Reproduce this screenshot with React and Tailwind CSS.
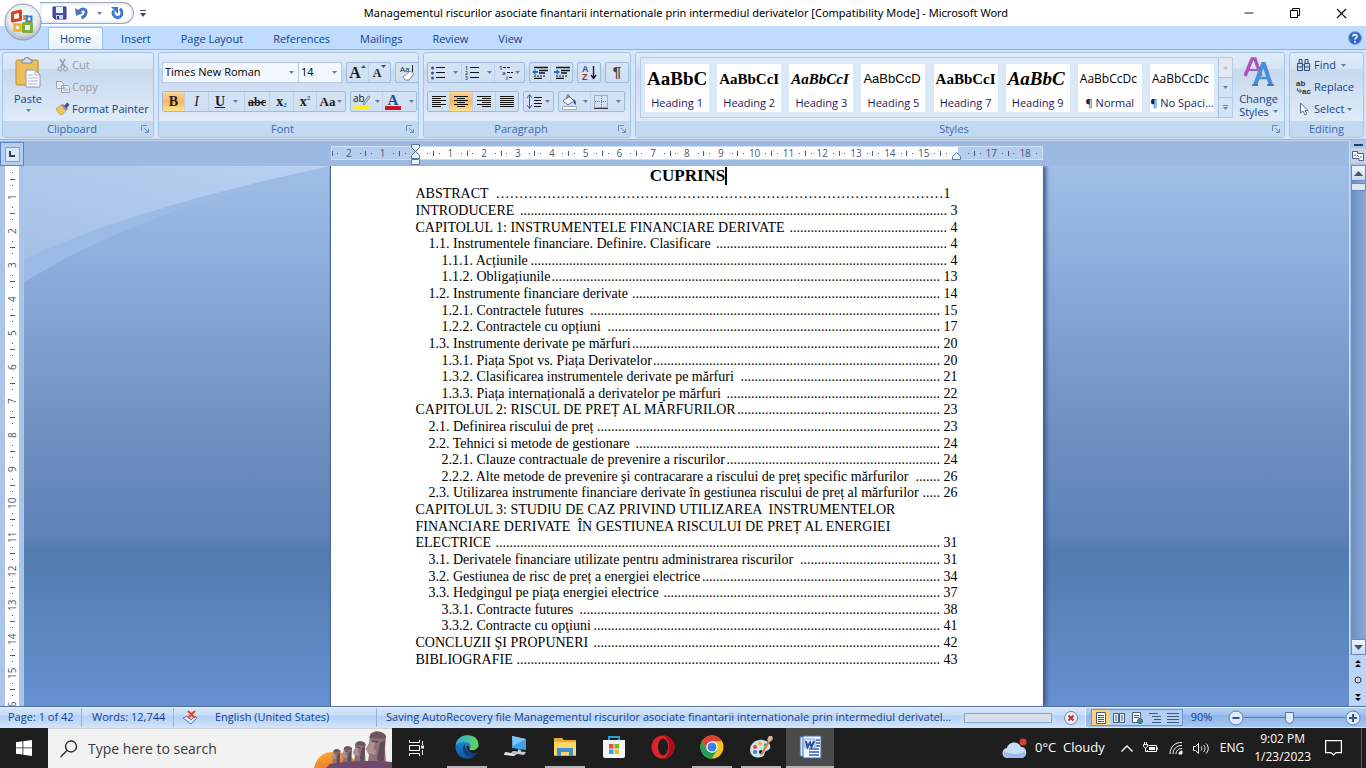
import { Minus, X } from "lucide-react";

const tabs = ["Home", "Insert", "Page Layout", "References", "Mailings", "Review", "View"];

const styleCards = [
  { name: "Heading 1", sample: "AaBbC", look: "font-['Liberation_Serif',serif] font-bold text-[19px]" },
  { name: "Heading 2", sample: "AaBbCcI", look: "font-['Liberation_Serif',serif] font-bold text-[15px]" },
  { name: "Heading 3", sample: "AaBbCcI", look: "font-['Liberation_Serif',serif] font-bold italic text-[15px]" },
  { name: "Heading 5", sample: "AaBbCcD", look: "font-['Liberation_Sans',sans-serif] text-[13px]" },
  { name: "Heading 7", sample: "AaBbCcI", look: "font-['Liberation_Serif',serif] font-bold text-[15px]" },
  { name: "Heading 9", sample: "AaBbC", look: "font-['Liberation_Serif',serif] font-bold italic text-[19px]" },
  { name: "¶ Normal", sample: "AaBbCcDc", look: "font-['Open_Sans',sans-serif] text-[12px]" },
  { name: "¶ No Spaci...", sample: "AaBbCcDc", look: "font-['Open_Sans',sans-serif] text-[12px]" },
];

// dots: length of the tab leader between the entry and its page number
const toc = [
  { level: 0, text: "INTRODUCERE ", dots: 122, page: 3 },
  { level: 0, text: "CAPITOLUL 1: INSTRUMENTELE FINANCIARE DERIVATE ", dots: 45, page: 4 },
  { level: 1, text: "1.1. Instrumentele financiare. Definire. Clasificare ", dots: 66, page: 4 },
  { level: 2, text: "1.1.1. Acțiunile", dots: 119, page: 4 },
  { level: 2, text: "1.1.2. Obligațiunile", dots: 111, page: 13 },
  { level: 1, text: "1.2. Instrumente financiare derivate ", dots: 88, page: 14 },
  { level: 2, text: "1.2.1. Contractele futures ", dots: 100, page: 15 },
  { level: 2, text: "1.2.2. Contractele cu opțiuni ", dots: 95, page: 17 },
  { level: 1, text: "1.3. Instrumente derivate pe mărfuri", dots: 88, page: 20 },
  { level: 2, text: "1.3.1. Piața Spot vs. Piața Derivatelor", dots: 82, page: 20 },
  { level: 2, text: "1.3.2. Clasificarea instrumentele derivate pe mărfuri ", dots: 57, page: 21 },
  { level: 2, text: "1.3.3. Piața internațională a derivatelor pe mărfuri ", dots: 61, page: 22 },
  { level: 0, text: "CAPITOLUL 2: RISCUL DE PREȚ AL MĂRFURILOR", dots: 58, page: 23 },
  { level: 1, text: "2.1. Definirea riscului de preț", dots: 98, page: 23 },
  { level: 1, text: "2.2. Tehnici si metode de gestionare ", dots: 87, page: 24 },
  { level: 2, text: "2.2.1. Clauze contractuale de prevenire a riscurilor", dots: 61, page: 24 },
  { level: 2, text: "2.2.2. Alte metode de prevenire şi contracarare a riscului de preț specific mărfurilor ", dots: 7, page: 26 },
  { level: 1, text: "2.3. Utilizarea instrumente financiare derivate în gestiunea riscului de preț al mărfurilor", dots: 5, page: 26 },
  { level: 0, text: "CAPITOLUL 3: STUDIU DE CAZ PRIVIND UTILIZAREA  INSTRUMENTELOR" },
  { level: 0, text: "FINANCIARE DERIVATE  ÎN GESTIUNEA RISCULUI DE PREȚ AL ENERGIEI" },
  { level: 0, text: "ELECTRICE ", dots: 127, page: 31 },
  { level: 1, text: "3.1. Derivatele financiare utilizate pentru administrarea riscurilor ", dots: 40, page: 31 },
  { level: 1, text: "3.2. Gestiunea de risc de preț a energiei electrice", dots: 68, page: 34 },
  { level: 1, text: "3.3. Hedgingul pe piaţa energiei electrice ", dots: 79, page: 37 },
  { level: 2, text: "3.3.1. Contracte futures ", dots: 103, page: 38 },
  { level: 2, text: "3.3.2. Contracte cu opţiuni", dots: 99, page: 41 },
  { level: 0, text: "CONCLUZII ŞI PROPUNERI ", dots: 99, page: 42 },
  { level: 0, text: "BIBLIOGRAFIE", dots: 121, page: 43 },
];

const indents = ["", "pl-[13px]", "pl-[26px]"];

const Caret = ({ className = "" }) => (
  <svg width="5" height="3" viewBox="0 0 5 3" className={`shrink-0 ${className}`}>
    <path d="M0 0h5L2.500 3z" fill="#5f80ad" />
  </svg>
);

/* ---------- Title bar ---------- */

const OfficeLogo = () => (
  <svg width="38" height="38" viewBox="0 0 38 38">
    <defs>
      <radialGradient id="orb" cx="50%" cy="35%" r="65%">
        <stop offset="0" stopColor="#ffffff" />
        <stop offset="0.65" stopColor="#e4e8ef" />
        <stop offset="1" stopColor="#a9b4c6" />
      </radialGradient>
    </defs>
    <circle cx="19" cy="19" r="18" fill="url(#orb)" stroke="#8d9bb3" />
    <path d="M8.500 10l8-2v8.500l-8 1.500z" fill="none" stroke="#d8431f" strokeWidth="3" strokeLinejoin="round" />
    <path d="M20 13h3v3h-3z" fill="none" stroke="#e88b2c" strokeWidth="2" />
    <path d="M22.500 13.500h5v5h-5z" fill="none" stroke="#3d7fd0" strokeWidth="2" />
    <path d="M10.500 21.500h6v6h-6z" fill="none" stroke="#f0b21c" strokeWidth="2.500" />
    <path d="M19.500 20.500h8v8h-8z" fill="none" stroke="#7daf3a" strokeWidth="3" strokeLinejoin="round" />
  </svg>
);

const TitleBar = () => (
  <header className="flex h-[26px] shrink-0 items-center bg-white">
    <div className="ml-10 flex h-[22px] w-[94px] items-center gap-2 rounded-r-full border border-l-0 border-[#9aa6bd] pl-3 shadow-[inset_0_0_4px_#c9d6ea]">
      <button aria-label="Save">
        <svg width="15" height="14" viewBox="0 0 15 14">
          <path d="M1 1h13v12H3l-2-2z" fill="#4a4fae" stroke="#30358a" />
          <path d="M4 1h7v6H4z" fill="#eef2fb" />
          <path d="M4 9h7v4H4z" fill="#cfd6ec" />
          <path d="M5 10h2v3H5z" fill="#30358a" />
        </svg>
      </button>
      <button aria-label="Undo" className="flex items-center gap-2">
        <svg width="14" height="14" viewBox="0 0 14 14">
          <path d="M4 6C6 2 12 2 11 7c-.5 2.500-2 4-4.500 5" fill="none" stroke="#4a74bd" strokeWidth="3" />
          <path d="M0 2l1 8 7-3z" fill="#4a74bd" />
        </svg>
        <Caret />
      </button>
      <button aria-label="Redo">
        <svg width="14" height="14" viewBox="0 0 14 14">
          <path d="M3.500 4.500c-3 7 8 10 8.500 2.500 0-2-.5-3-2-4.500" fill="none" stroke="#3b7bd0" strokeWidth="3" />
          <path d="M1 1h7v7z" fill="#3b7bd0" />
        </svg>
      </button>
    </div>
    <button aria-label="Customize Quick Access Toolbar" className="ml-[6px]">
      <svg width="6" height="7" viewBox="0 0 6 7">
        <path d="M0 0h6v1H0zM0 3h6L3 7z" fill="#3a4a66" />
      </svg>
    </button>
    <h1 className="flex-1 truncate pt-px text-center font-['Noto_Sans',sans-serif] text-[11px] text-black">
      Managementul riscurilor asociate finantarii internationale prin intermediul derivatelor [Compatibility Mode] - Microsoft Word
    </h1>
    <div className="flex pr-[2px] text-black">
      <button aria-label="Minimize" className="flex w-[46px] items-center justify-center">
        <Minus size={14} strokeWidth={1.500} />
      </button>
      <button aria-label="Restore" className="flex w-[46px] items-center justify-center">
        <svg width="10" height="10" viewBox="0 0 10 10" fill="none" stroke="currentColor">
          <path d="M.5 2.500h7v7h-7zM2.500 2.500v-2h7v7h-2" />
        </svg>
      </button>
      <button aria-label="Close" className="flex w-[46px] items-center justify-center">
        <X size={17} strokeWidth={1.500} />
      </button>
    </div>
  </header>
);

const TabBar = () => (
  <nav className="flex h-[23px] shrink-0 items-end bg-[#bfdbff] pl-[48px]">
    <div className="flex flex-1 gap-[6px]">
      {tabs.map((tab, i) => (
        <button
          key={tab}
          className={`h-[22px] border border-b-0 px-[11px] pt-px text-[11px] text-[#15428b] ${
            i === 0 ? "rounded-t-[3px] border-[#a0bde4] bg-linear-to-b from-white to-[#e6f0fb]" : "border-transparent"
          }`}
        >
          {tab}
        </button>
      ))}
    </div>
    <button aria-label="Help" className="mr-1 mb-1">
      <svg width="14" height="14" viewBox="0 0 14 14">
        <circle cx="7" cy="7" r="6.500" fill="#2f68c5" stroke="#7fa6de" />
        <path d="M4.800 5.500C5 3 9.200 3 9 5.500c0 1.500-2 1.500-2 3" fill="none" stroke="#fff" strokeWidth="1.600" />
        <circle cx="7" cy="10.700" r="1" fill="#fff" />
      </svg>
    </button>
  </nav>
);

/* ---------- Ribbon ---------- */

const Group = ({ title, launcher = true, className = "", children }) => (
  <section
    className={`flex flex-col overflow-hidden rounded-[3px] border border-[#a5c3e8] bg-[linear-gradient(#dfebf8_0,#d6e4f4_18%,#c8d9ee_20%,#dde9f7_75%,#e4effb_100%)] ${className}`}
  >
    <div className="flex flex-1">{children}</div>
    <div className="flex h-[16px] items-center bg-[#c1d9f1] text-[#3e6aaa]">
      <h2 className="flex-1 text-center text-[11px] leading-4">{title}</h2>
      {launcher && (
        <button aria-label={`${title} options`} className="mr-1">
          <svg width="8" height="8" viewBox="0 0 8 8" fill="none" stroke="#6a8fc0">
            <path d="M.5 6V.5H6M3 3l4 4M7.500 4v3.500H4" />
          </svg>
        </button>
      )}
    </div>
  </section>
);

const Cluster = ({ children }) => (
  <div className="flex h-[21px] items-stretch divide-x divide-[#bcd0ea] rounded-[2px] border border-[#9dbadf] bg-linear-to-b from-[#d5e3f4] to-[#cfdff2] text-[#1d1d1d]">
    {children}
  </div>
);

const Tool = ({ label, active, className = "w-[22px]", children }) => (
  <button
    aria-label={label}
    className={`flex items-center justify-center gap-1 ${className} ${
      active ? "bg-linear-to-b from-[#fdd49a] via-[#fbb55a] to-[#fee58c]" : ""
    }`}
  >
    {children}
  </button>
);

const Lines = ({ rows }) => (
  <svg width="14" height="13" viewBox="0 0 14 13" fill="#111">
    {rows.map(([x, w], i) => (
      <rect key={i} x={x} y={i * 2 + 1} width={w} height="1" />
    ))}
  </svg>
);

const ListIcon = ({ marks }) => (
  <svg width="14" height="14" viewBox="0 0 14 14">
    {marks.map((m, i) => (
      <g key={i}>
        {m ? (
          <text x="0" y={i * 5 + 4} fontSize="5" fontWeight="700" fill="#2f5597">{m}</text>
        ) : (
          <circle cx="1.500" cy={i * 5 + 2} r="1.500" fill="#2f5597" />
        )}
        <rect x="5" y={i * 5 + 1} width="9" height="1" fill="#111" />
      </g>
    ))}
  </svg>
);

const Clipboard = () => (
  <Group title="Clipboard" className="w-[152px]">
    <button className="flex w-[50px] flex-col items-center pt-1 text-[11px] leading-4 text-[#15428b]">
      <svg width="28" height="32" viewBox="0 0 28 32">
        <rect x="2" y="3" width="22" height="25" rx="1.500" fill="#efbd5a" stroke="#b98d3c" />
        <path d="M8 6V3h2a3 2.500 0 0 1 6 0h2v3z" fill="#d9dde4" stroke="#7c8799" />
        <path d="M12 13h9l5 5v12H12z" fill="#fff" stroke="#8796b4" />
        <path d="M21 13v5h5M14 18h5M14 21h10M14 24h10M14 27h10" fill="none" stroke="#a5b4d3" />
      </svg>
      <span className="mt-[2px]">Paste</span>
      <Caret className="mt-[2px]" />
    </button>
    <div className="flex flex-col pt-px text-[11px] text-[#15428b]">
      <button className="flex h-[22px] items-center gap-[2px] pl-[3px] text-[#9a9ea6]">
        <svg width="14" height="14" viewBox="0 0 14 14" fill="none" stroke="#8f98a8">
          <path d="M4 1l5 8M9 1L5 9" strokeWidth="1.500" />
          <circle cx="4" cy="11" r="2" />
          <circle cx="9.500" cy="11" r="2" />
        </svg>
        Cut
      </button>
      <button className="flex h-[22px] items-center gap-[2px] pl-[3px] text-[#9a9ea6]">
        <svg width="14" height="12" viewBox="0 0 14 12" fill="#e9eef6" stroke="#9aa5b8">
          <path d="M.5.5h5l2 2v5h-7zM5.500 4.500h6l2 2v5h-8z" />
          <path d="M7 7h3M7 9h5" />
        </svg>
        Copy
      </button>
      <button className="flex h-[22px] items-center gap-[2px] pl-[3px]">
        <svg width="14" height="14" viewBox="0 0 14 14">
          <path d="M0 7l5-4 5 5-4 5c-2 0-4-3-6-6z" fill="#f0c860" stroke="#b08a30" strokeWidth=".7" />
          <path d="M5 3l2-1 5 5-2 2z" fill="#8f8fb8" />
          <path d="M8 4l3-3.500 2.500 2-3 4z" fill="#4a4f86" />
        </svg>
        Format Painter
      </button>
    </div>
  </Group>
);

const FontGroup = () => (
  <Group title="Font" className="w-[261px]">
    <div className="flex flex-1 flex-col gap-2 px-[3px] pt-[9px]">
      <div className="flex gap-1">
        <div className="flex h-[21px] border border-[#b4cbe9] bg-[#f3f8fe] text-[11px] text-black">
          <label className="relative flex w-[136px] items-center border-r border-[#b4cbe9]">
            <select aria-label="Font" className="w-full appearance-none bg-transparent pl-[2px] outline-none">
              <option>Times New Roman</option>
            </select>
            <Caret className="absolute right-1" />
          </label>
          <label className="relative flex w-[42px] items-center">
            <select aria-label="Font size" className="w-full appearance-none bg-transparent pl-[2px] outline-none">
              <option>14</option>
            </select>
            <Caret className="absolute right-1" />
          </label>
        </div>
        <Cluster>
          <Tool label="Grow Font">
            <span className="font-['Liberation_Serif',serif] text-[16px] font-bold">A</span>
            <svg width="5" height="3" viewBox="0 0 5 3" className="-ml-1 mb-3"><path d="M0 3h5L2.500 0z" fill="#2f5597" /></svg>
          </Tool>
          <Tool label="Shrink Font" className="w-[21px]">
            <span className="font-['Liberation_Serif',serif] text-[12px] font-bold">A</span>
            <svg width="5" height="3" viewBox="0 0 5 3" className="-ml-1 mb-3"><path d="M0 0h5L2.500 3z" fill="#2f5597" /></svg>
          </Tool>
        </Cluster>
        <Cluster>
          <Tool label="Clear Formatting">
            <svg width="17" height="17" viewBox="0 0 17 17">
              <text x="1" y="8" fontSize="8" fontFamily="Open Sans" fill="#222">Aa</text>
              <path d="M13.500 1v7" stroke="#222" />
              <path d="M4 13l7-6 4 3-5 6H6z" fill="#fff" stroke="#7c88a0" />
            </svg>
          </Tool>
        </Cluster>
      </div>
      <div className="flex gap-1 font-['Liberation_Serif',serif] text-[14px]">
        <Cluster>
          <Tool label="Bold" active><b>B</b></Tool>
          <Tool label="Italic" className="w-[24px]"><i>I</i></Tool>
          <Tool label="Underline" className="w-[36px]"><b className="underline">U</b><Caret className="ml-1" /></Tool>
          <Tool label="Strikethrough" className="w-[25px]"><b className="text-[12px] line-through">abc</b></Tool>
          <Tool label="Subscript" className="w-[24px]">
            <b className="flex items-end leading-4">x<small className="text-[7px] leading-[9px] text-[#2f5597]">2</small></b>
          </Tool>
          <Tool label="Superscript" className="w-[23px]">
            <b className="flex items-start leading-4">x<small className="text-[7px] leading-[9px] text-[#2f5597]">2</small></b>
          </Tool>
          <Tool label="Change Case" className="w-[28px]"><b className="text-[13px]">Aa</b><Caret className="-ml-[2px]" /></Tool>
        </Cluster>
        <Cluster>
          <Tool label="Highlight" className="w-[32px]">
            <svg width="18" height="17" viewBox="0 0 18 17" overflow="visible">
              <text x="0" y="9" fontSize="10" fontFamily="Open Sans" fill="#111">ab</text>
              <path d="M10 11l5-8 2 1-5 7-2 2z" fill="#cfd8ea" stroke="#555f7a" strokeWidth=".7" />
              <path d="M0 12h16v4H0z" fill="#f7ec2b" />
            </svg>
            <Caret />
          </Tool>
          <Tool label="Font Color" className="w-[33px]">
            <span className="flex h-[17px] w-4 flex-col items-center border-b-4 border-[#cf1420] text-[15px] leading-[14px] text-[#264a8c]"><b>A</b></span>
            <Caret className="ml-1" />
          </Tool>
        </Cluster>
      </div>
    </div>
  </Group>
);

const Paragraph = () => (
  <Group title="Paragraph" className="w-[208px]">
    <div className="flex flex-1 flex-col gap-2 px-[3px] pt-[9px]">
      <div className="flex gap-1">
        <Cluster>
          <Tool label="Bullets" className="w-[34px]"><ListIcon marks={["", "", ""]} /><Caret className="ml-1" /></Tool>
          <Tool label="Numbering" className="w-[33px]"><ListIcon marks={["1", "2", "3"]} /><Caret className="ml-1" /></Tool>
          <Tool label="Multilevel List" className="w-[29px]">
            <svg width="16" height="15" viewBox="0 0 16 15" overflow="visible">
              <g fontSize="6" fontWeight="700" fill="#2f5597">
                <text x="0" y="5">1</text>
                <text x="3" y="10">a</text>
                <text x="7" y="15">i</text>
              </g>
              <path d="M4 2.500h8M8 7.500h6M10 12.500h4" stroke="#111" strokeDasharray="3 1" />
            </svg>
            <Caret className="-ml-1" />
          </Tool>
        </Cluster>
        <Cluster>
          {["Decrease Indent", "Increase Indent"].map((label, i) => (
            <Tool key={label} label={label} className="w-[21px]">
              <svg width="16" height="13" viewBox="0 0 16 13">
                <path d="M2 1.500h14M7 4.500h9M7 7h6M2 12.500h8" stroke="#111" strokeWidth="1.500" />
                <path d="M2 10h11" stroke="#111" strokeDasharray="2 1" />
                <path d={i === 0 ? "M0 6l3.500-3v2H6v2H3.500v2z" : "M6 6L2.500 3v2H0v2h2.500v2z"} fill="#2f67c5" />
              </svg>
            </Tool>
          ))}
        </Cluster>
        <Cluster>
          <Tool label="Sort">
            <svg width="15" height="17" viewBox="0 0 15 17">
              <g fontFamily="Liberation Sans" fontSize="9" fontWeight="700">
                <text x="0" y="8" fill="#2f5597">A</text>
                <text x="0" y="16" fill="#b5242c">Z</text>
              </g>
              <path d="M11.500 2v12M9 11l2.500 3.500L14 11" fill="none" stroke="#111" strokeWidth="1.300" />
            </svg>
          </Tool>
        </Cluster>
        <Cluster>
          <Tool label="Show paragraph marks"><span className="font-['Liberation_Sans',sans-serif] text-[15px] font-bold text-[#444]">¶</span></Tool>
        </Cluster>
      </div>
      <div className="flex gap-1">
        <Cluster>
          <Tool label="Align Left"><Lines rows={[[0, 14], [0, 9], [0, 14], [0, 9], [0, 14], [0, 9]]} /></Tool>
          <Tool label="Center" active className="w-[23px]"><Lines rows={[[0, 14], [3, 8], [0, 14], [3, 8], [0, 14], [3, 8]]} /></Tool>
          <Tool label="Align Right" className="w-[23px]"><Lines rows={[[0, 14], [5, 9], [0, 14], [5, 9], [0, 14], [5, 9]]} /></Tool>
          <Tool label="Justify"><Lines rows={[[0, 14], [0, 14], [0, 14], [0, 14], [0, 14], [0, 14]]} /></Tool>
        </Cluster>
        <Cluster>
          <Tool label="Line spacing" className="w-[29px]">
            <svg width="15" height="15" viewBox="0 0 15 15">
              <path d="M2.500 1v13M0 4l2.500-3.500L5 4M0 11l2.500 3.500L5 11" fill="none" stroke="#2f67a5" />
              <path d="M7 3.500h8M7 6.500h7M7 9.500h8M7 12.500h7" stroke="#111" />
            </svg>
            <Caret className="-ml-px" />
          </Tool>
        </Cluster>
        <Cluster>
          <Tool label="Shading" className="w-[32px]">
            <svg width="17" height="16" viewBox="0 0 17 16">
              <path d="M2 7l6-5 5 5-6 4z" fill="#f2f6fc" stroke="#5b7195" />
              <path d="M6 5V1h2v3" fill="none" stroke="#5b7195" />
              <path d="M12 5c3 1 3 3 3 6-2-1-3-2-2-4z" fill="#3a5d98" />
              <path d="M1.500 12.500h14v3h-14z" fill="#fff" stroke="#9aabc6" />
            </svg>
            <Caret className="ml-px" />
          </Tool>
          <Tool label="Borders" className="w-[33px]">
            <svg width="14" height="14" viewBox="0 0 14 14" stroke="#6b7c98" fill="none">
              <path d="M.5.5h13v12H.5zM7.500 1v12M1 6.500h12" strokeDasharray="1 1" />
              <path d="M0 13.500h14" stroke="#333" />
            </svg>
            <Caret className="ml-1" />
          </Tool>
        </Cluster>
      </div>
    </div>
  </Group>
);

const Styles = () => (
  <Group title="Styles" className="min-w-0 flex-1">
    <div className="mt-[4px] mb-[3px] ml-[4px] flex min-w-0 flex-1 border border-[#b4cbe9] bg-[#dbe8f8]">
      <div className="flex flex-1 items-center justify-around overflow-hidden">
        {styleCards.map(({ name, sample, look }) => (
          <button key={name} className="flex h-[48px] w-[64px] flex-col bg-white">
            <span className="flex h-[31px] w-full items-center pl-[2px] text-black">
              <span className={`leading-[30px] ${look}`}>{sample}</span>
            </span>
            <span className="w-full text-center text-[11px] leading-4 whitespace-nowrap text-[#1b1b5e]">{name}</span>
          </button>
        ))}
      </div>
      <div className="flex w-[14px] flex-col divide-y divide-[#a8c4e8] border-l border-[#a8c4e8]">
        <button aria-label="Previous styles" className="flex flex-1 items-center justify-center bg-[#e6eaf0]">
          <svg width="5" height="3" viewBox="0 0 5 3"><path d="M0 3h5L2.500 0z" fill="#b5bccb" /></svg>
        </button>
        <button aria-label="Next styles" className="flex flex-1 items-center justify-center bg-[#d3e3f6]"><Caret /></button>
        <button aria-label="More styles" className="flex flex-1 flex-col items-center justify-center gap-px bg-[#d3e3f6]">
          <span className="h-px w-[5px] bg-[#5f80ad]" />
          <Caret />
        </button>
      </div>
    </div>
    <button className="flex w-[51px] flex-col items-center pt-[3px] text-[11px] leading-[13px] text-[#15428b]">
      <svg width="30" height="32" viewBox="0 0 30 32" fill="none">
        <path d="M1 20L8 3h3l6 17" stroke="#b052b8" strokeWidth="3.500" />
        <path d="M4 14h10" stroke="#b052b8" strokeWidth="2" />
        <path d="M11 29l8-21h1l7 21" stroke="#4a8fd6" strokeWidth="4" />
        <path d="M13 22h12" stroke="#4a8fd6" strokeWidth="2.500" />
        <path d="M8 29h6M23 29h7" stroke="#2f68ab" strokeWidth="1.500" />
      </svg>
      <span className="mt-[4px]">Change</span>
      <span className="flex items-center gap-1">Styles <Caret /></span>
    </button>
  </Group>
);

const Editing = () => (
  <Group title="Editing" launcher={false} className="w-[75px]">
    <div className="flex flex-col pt-px pl-[6px] text-[11px] text-[#15428b]">
      <button className="flex h-[22px] items-center gap-[3px]">
        <svg width="15" height="14" viewBox="0 0 15 14" fill="#c9d9f0" stroke="#2c4a80">
          <path d="M3 1.500h3v4H3zM9 1.500h3v4H9zM1.500 5.500h5v7h-5zM8.500 5.500h5v7h-5zM6.500 7h2" />
          <path d="M1.500 9h5M8.500 9h5" />
        </svg>
        Find <Caret className="ml-[2px]" />
      </button>
      <button className="flex h-[22px] items-center gap-[3px]">
        <svg width="15" height="15" viewBox="0 0 15 15" fontFamily="Liberation Sans" fontSize="8" fontWeight="700" fill="#333">
          <text x="0" y="6">ab</text>
          <text x="6" y="14">ac</text>
          <path d="M1.500 8v3H5M3.500 9L5.500 11l-2 2" fill="none" stroke="#2f5597" />
        </svg>
        Replace
      </button>
      <button className="flex h-[22px] items-center gap-[3px]">
        <svg width="15" height="14" viewBox="0 0 15 14">
          <path d="M4.500 1v10l2.500-2 2 4 2-1-2-3.500h3z" fill="#fff" stroke="#5a6b8a" />
        </svg>
        Select <Caret />
      </button>
    </div>
  </Group>
);

const Ribbon = () => (
  <div className="flex h-[91px] shrink-0 gap-1 border-t border-b border-t-[#8db2e3] border-b-[#8db2e3] bg-[#d5e6fb] px-[2px] pt-[2px] pb-px">
    <Clipboard />
    <FontGroup />
    <Paragraph />
    <Styles />
    <Editing />
  </div>
);

/* ---------- Workspace ---------- */

const HorizontalRuler = () => (
  <div className="relative mx-auto h-[14px] w-[712px] border border-[#cfe0f5] bg-[linear-gradient(90deg,#b5cdee_85px,#fff_85px,#fff_626px,#b5cdee_626px)] font-['Open_Sans',sans-serif] text-[10px] text-[#4a5a75]">
    <div className="grid h-full grid-cols-[repeat(21,minmax(0,1fr))]">
      {Array.from({ length: 21 }, (_, i) => i - 2).map((n) => (
        <div key={n} className="flex items-center justify-between">
          <span className="h-[5px] w-px bg-[#4a5a75]" />
          <span className="size-px bg-[#4a5a75]" />
          <span className="w-3 text-center leading-3">{n === 0 || n === 16 ? "" : Math.abs(n)}</span>
          <span className="size-px bg-[#4a5a75]" />
          <span />
        </div>
      ))}
    </div>
    <svg width="11" height="21" viewBox="0 0 11 21" className="absolute -top-[3px] left-[78px]" fill="#eef4fc" stroke="#5c78a5">
      <path d="M1.500.5h8v3l-4 4-4-4zM1.500 14.500v-3l4-4 4 4v3zM1.500 15.500h8v5h-8z" />
    </svg>
    <svg width="11" height="8" viewBox="0 0 11 8" className="absolute top-[5px] left-[619px]" fill="#eef4fc" stroke="#5c78a5">
      <path d="M1.500 7.500v-3l4-4 4 4v3z" />
    </svg>
  </div>
);

const VerticalRuler = () => (
  <div className="flex w-6 shrink-0 justify-center overflow-hidden bg-[#a9c6ea]">
    <div className="w-[14px] bg-white font-['Open_Sans',sans-serif] text-[10px] text-[#4a5a75]">
      <div className="flex h-[13px] items-center justify-center"><span className="size-px bg-[#4a5a75]" /></div>
      {Array.from({ length: 16 }, (_, i) => i + 1).map((n) => (
        <div key={n} className="flex h-[34px] flex-col items-center justify-between">
          <span className="h-px w-[5px] bg-[#4a5a75]" />
          <span className="size-px bg-[#4a5a75]" />
          <span className="h-3 rotate-180 text-center leading-[14px] [writing-mode:vertical-rl]">{n}</span>
          <span className="size-px bg-[#4a5a75]" />
          <span />
        </div>
      ))}
    </div>
  </div>
);

const Page = () => (
  <main className="relative mx-auto w-[712px] bg-white px-[85px] font-['Liberation_Serif',serif] text-black shadow-[3px_0_4px_#3c5a88,-1px_0_1px_#4c6a98]">
    <h2 className="flex h-5 items-center justify-center pl-1 text-[17px] font-bold">
      CUPRINS
      <span className="h-[18px] w-[2px] bg-black" />
    </h2>
    <div className="grid h-[482px] auto-rows-fr grid-cols-1 text-[14px] leading-4">
      <p className="flex items-center justify-between pr-[7px] whitespace-pre">
        <span>ABSTRACT</span>
        <span>{"…".repeat(32)}1</span>
      </p>
      {toc.map(({ level, text, dots, page }) => (
        <p key={text} className={`flex items-center justify-between whitespace-pre ${indents[level]}`}>
          <span>{text}</span>
          {page && (
            <span>
              {".".repeat(dots)} {page}
            </span>
          )}
        </p>
      ))}
    </div>
  </main>
);

const ScrollBar = () => (
  <div className="flex w-[17px] shrink-0 flex-col items-center border-l border-[#c5dbf5] bg-[#a9c6ea] pt-1">
    <span className="h-[2px] w-[9px] bg-[#24406f]" />
    <button aria-label="View Ruler" className="mt-[2px] flex size-[15px] items-center justify-center bg-[#c9d3e2]">
      <svg width="13" height="12" viewBox="0 0 13 12" fill="#fff" stroke="#4d5f80">
        <path d="M.5 1.500h5v2h6v7H7v-2H.5zM3 4v2M5 5l2 2M9 6v2" />
      </svg>
    </button>
    <button aria-label="Scroll up" className="mt-[2px] flex h-4 w-[15px] items-center justify-center border border-[#6c8ab8] bg-linear-to-b from-[#f1f5fb] to-[#c7d9f0]">
      <svg width="9" height="5" viewBox="0 0 9 5"><path d="M0 5h9L4.500 0z" fill="#3f5477" /></svg>
    </button>
    <div className="w-[15px] flex-1 bg-linear-to-r from-[#6c8ebd] to-[#86a8d4] pt-[2px]">
      <div className="h-2 border border-[#6c8ab8] bg-[#d9e6f6]" />
    </div>
    <button aria-label="Scroll down" className="flex h-4 w-[15px] items-center justify-center border border-[#6c8ab8] bg-linear-to-b from-[#f1f5fb] to-[#c7d9f0]">
      <svg width="9" height="5" viewBox="0 0 9 5"><path d="M0 0h9L4.500 5z" fill="#3f5477" /></svg>
    </button>
    <div className="flex h-[51px] w-full flex-col items-center justify-around bg-[#bcd5f5]">
      <button aria-label="Previous Page">
        <svg width="6" height="7" viewBox="0 0 6 7"><path d="M0 3l3-3 3 3zM0 7l3-3 3 3z" fill="#111" /></svg>
      </button>
      <button aria-label="Select Browse Object">
        <svg width="8" height="8" viewBox="0 0 8 8"><circle cx="4" cy="4" r="3" fill="#c9d3df" stroke="#333" /></svg>
      </button>
      <button aria-label="Next Page">
        <svg width="6" height="7" viewBox="0 0 6 7"><path d="M0 0l3 3 3-3zM0 4l3 3 3-3z" fill="#111" /></svg>
      </button>
    </div>
  </div>
);

const Workspace = () => (
  <div className="flex min-h-0 flex-1 border-b border-[#4f6f9f] bg-[#9cbae1]">
    <div className="flex min-w-0 flex-1 flex-col">
      <div className="flex h-[26px] shrink-0 items-start border-t border-[#c3d8ee]">
        <button aria-label="Tab stop" className="mt-px flex size-[24px] shrink-0 items-center justify-center border border-[#5b83c4] bg-[#b5cdee]">
          <span className="flex size-[15px] items-center justify-center border border-[#7ea0d3] bg-[#dbe8f8]">
            <span className="size-[6px] border-b-2 border-l-2 border-[#333f55]" />
          </span>
        </button>
        <div className="flex-1 pt-[5px]">
          <HorizontalRuler />
        </div>
      </div>
      <div className="flex min-h-0 flex-1">
        <VerticalRuler />
        <div className="relative flex min-w-0 flex-1 overflow-hidden bg-[linear-gradient(#9fbfe8_0%,#86a6d5_25%,#6d8fc0_50%,#5f83b8_68%,#537bb0_72%,#5a84bb_83%,#6690d0_100%)]">
          <svg width="307" height="120" viewBox="0 0 307 120" className="absolute top-0 left-0">
            <defs>
              <linearGradient id="swoosh" x1="0" y1="1" x2="1" y2="0">
                <stop offset="0" stopColor="#a3c0e4" />
                <stop offset="1" stopColor="#b9d2f3" />
              </linearGradient>
            </defs>
            <path d="M0 0h307C190 28 85 62 0 117z" fill="#9bbbe6" />
            <path d="M0 0h307C190 25 90 52 0 93z" fill="url(#swoosh)" />
          </svg>
          <Page />
        </div>
      </div>
    </div>
    <ScrollBar />
  </div>
);

/* ---------- Status bar ---------- */

const StatusBar = () => (
  <footer className="flex h-[21px] shrink-0 items-stretch border-t border-[#e8f2fe] bg-[linear-gradient(#d7e6f9_0,#c7dcf8_35%,#b3d0f5_40%,#d3e5fb_100%)] pb-px text-[11px] whitespace-nowrap text-[#15428b]">
    <button className="w-[82px] border-r border-[#94b3dc] pl-2 text-left">Page: 1 of 42</button>
    <button className="w-[92px] border-r border-[#94b3dc] pl-[10px] text-left">Words: 12,744</button>
    <button aria-label="Proofing errors" className="w-[34px] pl-[8px]">
      <svg width="17" height="15" viewBox="0 0 17 15">
        <path d="M1 8l4-2 4 4 4-4 2 2-6 6z" fill="#dce6f5" stroke="#5f7cad" />
        <path d="M6 1l7 7M13 1L6 8" stroke="#df4a2a" strokeWidth="2" />
      </svg>
    </button>
    <button className="w-[169px] border-r border-[#94b3dc] pl-[7px] text-left">English (United States)</button>
    <div className="flex min-w-0 flex-1 items-center pl-[9px]">
      <span className="min-w-0 flex-1">
        Saving AutoRecovery file Managementul riscurilor asociate finantarii internationale prin intermediul derivatel...
      </span>
      <span className="ml-2 h-[10px] w-[88px] shrink-0 border border-[#8ba3c7] bg-[#d9dfea]" />
      <button aria-label="Cancel" className="mr-[7px] ml-3 shrink-0">
        <svg width="14" height="14" viewBox="0 0 14 14">
          <circle cx="7" cy="7" r="6.500" fill="#e8eef7" stroke="#6e83a8" />
          <path d="M4.500 4.500l5 5M9.500 4.500l-5 5" stroke="#cc2d1e" strokeWidth="2" />
        </svg>
      </button>
    </div>
    <div className="flex w-[281px] shrink-0 items-center border-l border-[#eaf3ff] bg-[linear-gradient(#b5cff2_0,#a0c1ee_35%,#8eb4e8_40%,#a5c6f1_100%)] pl-[5px]">
      <div className="flex h-[17px] items-center border border-[#6d94cf] bg-[#b3cff3]">
        {[0, 1, 2, 3, 4].map((i) => (
          <button
            key={i}
            aria-label={["Print Layout", "Full Screen Reading", "Web Layout", "Outline", "Draft"][i]}
            className={`flex h-full w-[18px] items-center justify-center ${i === 0 ? "bg-[#fdcf7e]" : ""}`}
          >
            <svg width="12" height="12" viewBox="0 0 12 12" fill="none" stroke="#44597f">
              {i === 0 && <path d="M1.500.5h9v11h-9zM3 3.500h6M3 5.500h6M3 7.500h6M3 9.500h6" fill="#fff" />}
              {i === 1 && <path d="M.5 1.500h5v9h-5zM6.500 1.500h5v9h-5zM2 4h2M2 6h2M2 8h2M8 4h2M8 6h2M8 8h2" fill="#e8f0fb" />}
              {i === 2 && (
                <>
                  <path d="M1.500.5h8v10h-8zM3 3.500h5M3 5.500h5" fill="#fff" />
                  <circle cx="9" cy="9" r="2.500" fill="#3f9a78" stroke="#2a6d8f" />
                </>
              )}
              {i === 3 && <path d="M0 1.500h9M3 4.500h9M5 7.500h7M3 10.500h9" />}
              {i === 4 && <path d="M0 1.500h12M0 4.500h12M0 7.500h12M0 10.500h12" />}
            </svg>
          </button>
        ))}
      </div>
      <button className="w-[37px] text-center">90%</button>
      <button aria-label="Zoom out" className="ml-2">
        <svg width="16" height="16" viewBox="0 0 16 16">
          <circle cx="8" cy="8" r="7" fill="#dfeafa" stroke="#5d7fb8" />
          <path d="M4.500 8h7" stroke="#38557f" strokeWidth="2" />
        </svg>
      </button>
      <input
        type="range"
        aria-label="Zoom"
        min="10"
        max="190"
        defaultValue="90"
        className="h-4 min-w-0 flex-1 appearance-none bg-[linear-gradient(#5d7fb8,#5d7fb8)] bg-[length:100%_1px] bg-center bg-no-repeat [&::-webkit-slider-thumb]:h-[12px] [&::-webkit-slider-thumb]:w-[9px] [&::-webkit-slider-thumb]:appearance-none [&::-webkit-slider-thumb]:rounded-b-full [&::-webkit-slider-thumb]:border [&::-webkit-slider-thumb]:border-[#5573a5] [&::-webkit-slider-thumb]:bg-[#dfeafa]"
      />
      <button aria-label="Zoom in" className="mr-[5px]">
        <svg width="16" height="16" viewBox="0 0 16 16">
          <circle cx="8" cy="8" r="7" fill="#dfeafa" stroke="#5d7fb8" />
          <path d="M4 8h8M8 4v8" stroke="#38557f" strokeWidth="2" />
        </svg>
      </button>
    </div>
  </footer>
);

/* ---------- Taskbar ---------- */

const EdgeIcon = () => (
  <svg width="24" height="24" viewBox="0 0 24 24">
    <defs>
      <linearGradient id="edgeTop" x1="0" y1="0" x2="1" y2="0.300">
        <stop offset="0" stopColor="#2aa9e0" />
        <stop offset="1" stopColor="#5fd35a" />
      </linearGradient>
      <linearGradient id="edgeBody" x1="0" y1="0" x2="0" y2="1">
        <stop offset="0" stopColor="#1f94dc" />
        <stop offset="1" stopColor="#0c59a4" />
      </linearGradient>
    </defs>
    <circle cx="12" cy="12" r="11.500" fill="url(#edgeBody)" />
    <path d="M.8 10C2-3 24-3 23.500 10c0 4-4 6-8 5-1.500-.5-1.500-1-.5-2 1.500-2 0-6-5-6-4 0-7.500 1-9.200 3z" fill="url(#edgeTop)" />
    <path d="M10 9c-4 4-2 12 5 13 3 0 6-2 7.500-5-5 3-13 1-12.500-8z" fill="#0a3f86" />
    <path d="M14.500 13c-1 1-1 1.500.5 2 3 1 6 0 8.500-3.500L24 14l-1.500 3.500C18 20 11 17 11.500 11c1 0 3 0 3 2z" fill="#1e1e1e" />
  </svg>
);

const RemoteIcon = () => (
  <svg width="24" height="24" viewBox="0 0 24 24">
    <path d="M8 1l14 3v11L8 13z" fill="#3f9fe8" />
    <path d="M8 1l14 3-13 7z" fill="#7cc6f8" />
    <path d="M14 14l3 1v3h-3z" fill="#b9c4cf" />
    <path d="M9 16l13 1-2 3-13-2z" fill="#c5ccd3" />
    <path d="M1 17l12 2-3 2-10-1z" fill="#e3e7eb" />
  </svg>
);

const FolderIcon = () => (
  <svg width="24" height="24" viewBox="0 0 24 24">
    <path d="M1 3h8l2 2h12v16H1z" fill="#e8a92e" />
    <path d="M1 7h22v13H1z" fill="#fcd667" />
    <path d="M4 21v-8h16v8h-4v-4H8v4z" fill="#3f8fd0" />
  </svg>
);

const StoreIcon = () => (
  <svg width="24" height="24" viewBox="0 0 24 24">
    <path d="M7 6V2h10v4" fill="none" stroke="#2f9ad8" strokeWidth="2" />
    <path d="M1 5h22v16a2 2 0 0 1-2 2H3a2 2 0 0 1-2-2z" fill="#f3f6f9" />
    <path d="M7 9h4.500v4.500H7z" fill="#e8502a" />
    <path d="M12.500 9H17v4.500h-4.500z" fill="#7bb51f" />
    <path d="M7 14.500h4.500V19H7z" fill="#2ba0e0" />
    <path d="M12.500 14.500H17V19h-4.500z" fill="#f5b618" />
  </svg>
);

const OperaIcon = () => (
  <svg width="24" height="24" viewBox="0 0 24 24">
    <circle cx="12" cy="12" r="11.500" fill="#e3202f" />
    <path d="M12 .5a11.500 11.500 0 0 1 0 23c8-2 8-21 0-23z" fill="#a70f1c" />
    <ellipse cx="12" cy="12" rx="5" ry="8.500" fill="#1e1e1e" />
  </svg>
);

const ChromeIcon = () => (
  <svg width="24" height="24" viewBox="0 0 24 24">
    <circle cx="12" cy="12" r="11.500" fill="#f9c31f" />
    <path d="M2 6.250A11.500 11.500 0 0 1 22 6.250H12L7 15z" fill="#dd4335" />
    <path d="M2 6.250A11.500 11.500 0 0 0 12 23.500l5-8.600-10 0z" fill="#22a056" />
    <circle cx="12" cy="12" r="5.800" fill="#fff" />
    <circle cx="12" cy="12" r="4.500" fill="#3b7fe8" />
  </svg>
);

const PaintIcon = () => (
  <svg width="24" height="24" viewBox="0 0 24 24">
    <path d="M1 15C1 8 8 4 14 5c5 1 8 4 7 8-1 3-4 2-5 4s0 4-4 5C6 24 1 20 1 15z" fill="#cfe3f3" />
    <circle cx="6" cy="12" r="2" fill="#e2453b" />
    <circle cx="11" cy="8.500" r="2" fill="#f2b732" />
    <circle cx="16.500" cy="10" r="1.800" fill="#56a940" />
    <circle cx="6" cy="17" r="2" fill="#3a7ed0" />
    <circle cx="12" cy="17" r="2" fill="#1e1e1e" />
    <path d="M12 18l8-14 2 1-8 14-3 2z" fill="#c98a3f" />
    <path d="M18 5l2-4h3l1 3-3 3z" fill="#dcb88f" />
  </svg>
);

const WordIcon = () => (
  <svg width="24" height="24" viewBox="0 0 24 24">
    <path d="M2 2l5-1v21l-5-1z" fill="#dbe6f6" stroke="#3d69b0" />
    <path d="M5 1h18v22H5z" fill="#f4f8fd" stroke="#3d69b0" />
    <path d="M18 5h4M18 8h4M18 11h4M11 14h10M11 17h10M11 20h10" stroke="#2f5ea8" strokeWidth="1.500" />
    <path d="M7 4h10v9H7z" fill="#e9f0fa" stroke="#7f9fd3" />
    <path d="M8 6l1.500 6L12 7.500l1.500 4.500L16 6" fill="none" stroke="#2850a0" strokeWidth="2" />
  </svg>
);

const apps = [
  { name: "Microsoft Edge", icon: EdgeIcon, open: true },
  { name: "Remote Desktop", icon: RemoteIcon },
  { name: "File Explorer", icon: FolderIcon, open: true },
  { name: "Microsoft Store", icon: StoreIcon },
  { name: "Opera", icon: OperaIcon },
  { name: "Google Chrome", icon: ChromeIcon, open: true },
  { name: "Paint", icon: PaintIcon, open: true },
  { name: "Microsoft Word", icon: WordIcon, open: true, active: true },
];

const Statues = () => (
  <svg width="78" height="38" viewBox="0 0 78 38" className="shrink-0 self-end">
    <defs>
      <linearGradient id="sunset" x1="0" y1="0" x2="1" y2="1">
        <stop offset="0" stopColor="#fbb52c" />
        <stop offset="0.6" stopColor="#ee7f33" />
      </linearGradient>
    </defs>
    <path d="M0 38C3 26 10 21 22 22c12 0 20 8 24 16z" fill="url(#sunset)" />
    {[
      [18, 19, 0.42],
      [28, 16, 0.5],
      [39, 11, 0.63],
      [52, 1, 1],
    ].map(([x, y, s]) => (
      <g key={x} transform={`translate(${x} ${y}) scale(${s})`}>
        <path d="M4 5C5-1 17-1 20 5l-1 13 1 14-4 4H1l2-12-3-6 3-6z" fill="#8c7276" />
        <path d="M4 5C5-1 17-1 20 5l-1 3L3 7z" fill="#6a5560" />
        <path d="M4 9l6 1-3 8 3 1-1 5-7-2-2-4 3-5z" fill="#b0918f" />
        <path d="M5 9l7 1v2l-6-1zM14 12l5-3-1 20-5 7-2-9z" fill="#604a58" />
      </g>
    ))}
    <path d="M16 34c14-3 40-4 62-2v6H12z" fill="#6d4a6c" />
  </svg>
);

const Taskbar = () => (
  <div className="flex h-10 shrink-0 items-stretch bg-[#1e1e1e] text-[12px] text-white">
    <button aria-label="Start" className="flex w-12 items-center justify-center">
      <svg width="16" height="16" viewBox="0 0 16 16" fill="#fff">
        <path d="M0 2.200l6.500-.9v6.200H0zM7.300 1.200L16 0v7.500H7.300zM0 8.300h6.500v6.300L0 13.700zM7.300 8.300H16V16l-8.700-1.200z" />
      </svg>
    </button>
    <label className="flex w-[344px] items-center border-t border-[#cfcfcf] bg-[#f2f2f2] text-[#222]">
      <svg width="18" height="18" viewBox="0 0 18 18" fill="none" stroke="currentColor" strokeWidth="1.300" className="ml-3 shrink-0">
        <circle cx="11" cy="6.500" r="5.500" />
        <path d="M7 10.500L.5 17" />
      </svg>
      <input
        type="text"
        aria-label="Search"
        placeholder="Type here to search"
        className="ml-[10px] min-w-0 flex-1 bg-transparent text-[14px] outline-none placeholder:text-[#3a3a3a]"
      />
      <Statues />
    </label>
    <button aria-label="Task View" className="flex w-12 items-center justify-center">
      <svg width="17" height="16" viewBox="0 0 17 16" fill="none" stroke="#fff">
        <path d="M1.500 0v2.500h10V0M1.500 16v-2.500h10V16M1.500 5.500h10v5h-10zM14.500 1v4M14.500 10v5" />
        <path d="M13 5.500h3v3h-3z" fill="#fff" stroke="none" />
      </svg>
    </button>
    <div className="ml-[3px] flex flex-1 gap-px">
      {apps.map(({ name, icon: Icon, open, active }) => (
        <button
          key={name}
          aria-label={name}
          className={`flex w-12 flex-col items-center ${active ? "bg-[#4a4a4a]" : ""}`}
        >
          <span className="flex flex-1 items-center"><Icon /></span>
          <span className={`h-[2px] ${active ? "w-full" : "w-10"} ${open ? "bg-[#b9b3b3]" : ""}`} />
        </button>
      ))}
    </div>
    <button className="flex items-center gap-2 text-[13px]">
      <svg width="25" height="21" viewBox="0 0 25 21">
        <path d="M6 20a5 5 0 0 1-1-10C7 3 17 3 19 9c7 0 7 11 0 11z" fill="#c9dcf7" />
        <path d="M6 20a5 5 0 0 1-4-7c5 4 16 4 21 0 1 3 0 7-4 7z" fill="#9dbcec" />
        <circle cx="21" cy="4" r="3.500" fill="#d2452a" />
      </svg>
      <span className="whitespace-pre">0°C  Cloudy</span>
    </button>
    <div className="ml-4 flex items-center gap-[10px]">
      <button aria-label="Show hidden icons">
        <svg width="12" height="7" viewBox="0 0 12 7" fill="none" stroke="#fff" strokeWidth="1.300"><path d="M.5 6.500L6 1l5.500 5.500" /></svg>
      </button>
      <button aria-label="Battery">
        <svg width="16" height="13" viewBox="0 0 16 13" fill="none" stroke="#fff">
          <path d="M5.500 3.500h8v6h-9V8M14.500 5.500v2M1.500 0v2M3.500 0v2M.5 2.500h4v2l-2 1.500-2-1.500zM2.500 6v3.500h2" />
          <path d="M6 5h6v3H6z" fill="#fff" stroke="none" />
        </svg>
      </button>
      <button aria-label="Network">
        <svg width="14" height="14" viewBox="0 0 14 14" fill="none" stroke="#fff">
          <path d="M1 13C1 6 6 1 13 1.500M4 13c0-5 3.500-8.500 9-8.500M7 13c0-3.500 2.500-5.500 6-5.500" />
          <path d="M10 13c0-2 1-3 3-3v3z" fill="#fff" />
        </svg>
      </button>
      <button aria-label="Volume">
        <svg width="17" height="13" viewBox="0 0 17 13" fill="none" stroke="#fff">
          <path d="M.5 4.500h2l3-3v10l-3-3h-2zM8 4.500c1 1 1 3 0 4M10.500 3c2 2 2 5 0 7M13 1.500c3 3 3 7 0 10" />
        </svg>
      </button>
      <button>ENG</button>
    </div>
    <button className="ml-[10px] text-center leading-[18px]">
      9:02 PM
      <br />
      1/23/2023
    </button>
    <button aria-label="Notifications" className="mr-[6px] flex w-11 items-center justify-center">
      <svg width="17" height="16" viewBox="0 0 17 16" fill="none" stroke="#fff" strokeWidth="1.200">
        <path d="M.6.600h15.800v12H11L8.500 15 6 12.600H.6z" />
      </svg>
    </button>
    <button aria-label="Show desktop" className="w-[5px] border-l border-[#5a5a5a]" />
  </div>
);

export default function App() {
  return (
    <div className="relative flex h-screen flex-col overflow-hidden font-['Open_Sans','Noto_Sans',sans-serif]">
      <TitleBar />
      <TabBar />
      <Ribbon />
      <Workspace />
      <StatusBar />
      <Taskbar />
      <button aria-label="Office Button" className="absolute top-[3px] left-[4px]">
        <OfficeLogo />
      </button>
    </div>
  );
}
